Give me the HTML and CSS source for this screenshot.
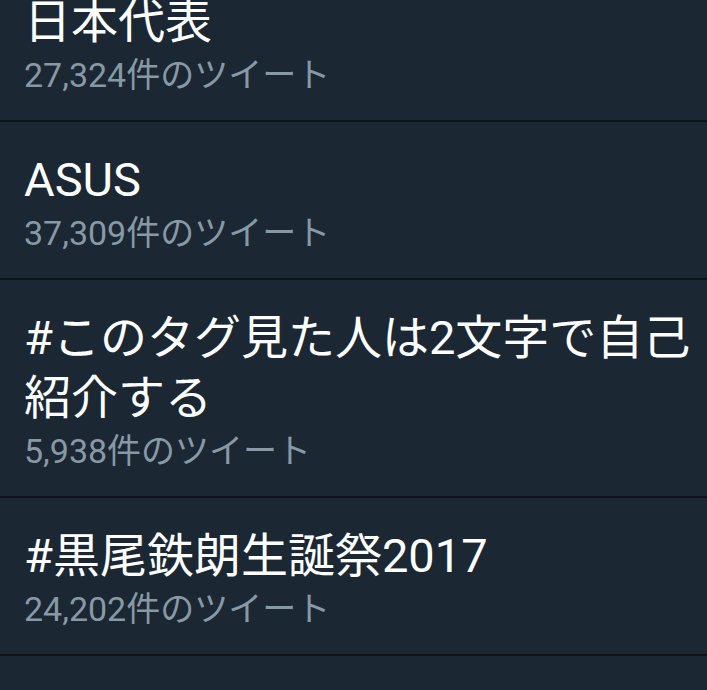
FILE: index.html
```html
<!DOCTYPE html>
<html lang="ja">
<head>
  <meta charset="UTF-8">
  <title>トレンド</title>
  <meta name="viewport" content="width=device-width, initial-scale=1.0">
  <link rel="stylesheet" href="styles.css">
</head>
<body>
  <ul class="trend-list">
    <li class="trend">
      <div class="trend-name">日本代表</div>
      <div class="trend-count">27,324件のツイート</div>
    </li>
    <li class="trend">
      <div class="trend-name">ASUS</div>
      <div class="trend-count">37,309件のツイート</div>
    </li>
    <li class="trend">
      <div class="trend-name">#このタグ見た人は2文字で自己紹介する</div>
      <div class="trend-count">5,938件のツイート</div>
    </li>
    <li class="trend">
      <div class="trend-name">#黒尾鉄朗生誕祭2017</div>
      <div class="trend-count">24,202件のツイート</div>
    </li>
  </ul>
</body>
</html>
```

FILE: styles.css
```css
html, body {
  margin: 0; padding: 0;
  height: 100%;
  background: #1b2733;
  font-family: Roboto, "Noto Sans CJK JP", sans-serif;
  overflow: hidden;
}
/* list is scrolled a little, first row is cut at the top */
.trend-list {
  list-style: none;
  margin: -36px 0 0 0;
  padding: 0;
}
.trend {
  padding: 28px 10px 25px 24px;
  border-bottom: 2px solid #0e141a;
}
.trend-name {
  color: #fff;
  font-size: 47px;
  line-height: 60px;
}
.trend-count {
  margin-top: 3px;
  color: #8899a6;
  font-size: 34px;
  line-height: 40px;
}
```
